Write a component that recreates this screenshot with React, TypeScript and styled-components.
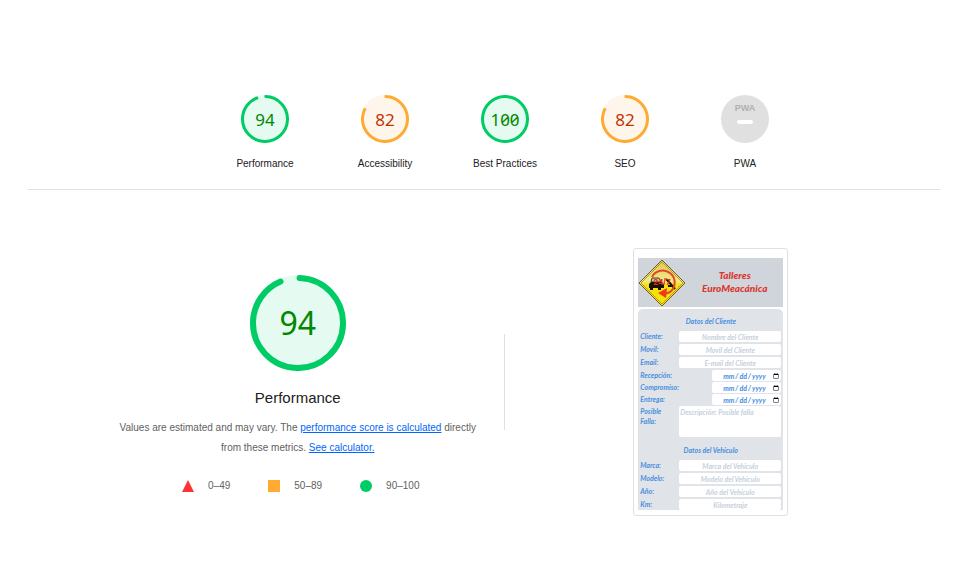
import React from "react";
import styled, { createGlobalStyle, css } from "styled-components";

const GlobalStyle = createGlobalStyle`
  * { box-sizing: border-box; }
  body {
    margin: 0;
    background: #fff;
    color: #212121;
    font-family: "Liberation Sans", Arial, sans-serif;
    font-size: 10px;
    line-height: 20px;
  }
`;

const palette = {
  pass: { ring: "#00cc66", fill: "#e5faf0", text: "#008800" },
  average: { ring: "#ffaa33", fill: "#fff6eb", text: "#c33300" },
};
type Rating = keyof typeof palette;

const Page = styled.main`
  padding: 95px 27px 0 28px;
`;

const ScoresHeader = styled.header`
  display: flex;
  justify-content: center;
  padding: 0 0 15px 42px;
  border-bottom: 1px solid #e0e0e0;
`;

const GaugeLink = styled.a`
  width: 120px;
  display: flex;
  flex-direction: column;
  align-items: center;
  gap: 11px;
  color: inherit;
  text-decoration: none;
`;

const Dial = styled.div<{ $size: number }>`
  display: grid;
  place-items: center;
  width: ${(p) => p.$size}px;
  height: ${(p) => p.$size}px;
  > * { grid-area: 1 / 1; }
  svg { display: block; }
`;

const Score = styled.span<{ $rating: Rating; $large?: boolean }>`
  font-family: "Noto Sans", sans-serif;
  font-variant-numeric: slashed-zero;
  font-size: ${(p) => (p.$large ? 32 : 17)}px;
  line-height: 1;
  color: ${(p) => palette[p.$rating].text};
`;

const Summary = styled.section`
  display: grid;
  grid-template-columns: 1fr 1fr;
  padding: 58px 23px 0 64px;
`;

const Overview = styled.div`
  display: flex;
  align-items: center;
`;

const Column = styled.div`
  display: flex;
  flex: 1;
  flex-direction: column;
  align-items: center;
  align-self: flex-start;
  padding-top: 27px;
`;

const Rule = styled.div`
  width: 1px;
  height: 96px;
  background: #e0e0e0;
`;

const Title = styled.h2`
  margin: 15px 0 8px;
  font-size: 15px;
  line-height: 24px;
  font-weight: 400;
`;

const Description = styled.p`
  margin: 0;
  max-width: 360px;
  color: #616161;
  text-align: center;
`;

const TextLink = styled.a`
  color: #0066ff;
`;

const Legend = styled.ul`
  display: flex;
  gap: 38px;
  margin: 18px 0 0 6px;
  padding: 0;
  list-style: none;
  color: #616161;
`;

const LegendItem = styled.li`
  display: flex;
  align-items: center;
  gap: 14px;
`;

const Phone = styled.div`
  justify-self: center;
  width: 155px;
  padding: 9px 4px 4px;
  border: 1px solid #e0e0e0;
  border-radius: 3px;
  font-family: Lato, sans-serif;
  font-style: italic;
  font-weight: 700;
  font-size: 7px;
  line-height: 10px;
  color: #4a8fe0;
`;

const Banner = styled.div`
  display: flex;
  align-items: center;
  height: 49px;
  background: #d0d5db;
`;

const BannerTitle = styled.h3`
  flex: 1;
  margin: 0 0 2px;
  color: #dc352f;
  font-size: 10px;
  line-height: 13px;
  font-weight: 900;
  text-align: center;
`;

const Form = styled.form`
  margin-top: 2px;
  padding: 1px 2px 0;
  border-radius: 5px 5px 0 0;
  background: #e0e4e8;
`;

const FormTitle = styled.h4`
  margin: 0;
  padding: 7px 0 6px;
  font-size: 7px;
  line-height: 8px;
  text-align: center;
`;

const Field = styled.label<{ $date?: boolean }>`
  display: grid;
  grid-template-columns: ${(p) => (p.$date ? "72px" : "39px")} 1fr;
  margin-bottom: ${(p) => (p.$date ? 1 : 2)}px;
  &:last-child { margin-bottom: 1px; }
`;

const inputBase = css`
  display: block;
  width: 100%;
  min-width: 0;
  margin: 0;
  border: 0;
  border-radius: 2px;
  background: #fff;
  color: inherit;
  font: inherit;
  &::placeholder { color: #c6d0dc; opacity: 1; }
`;

const TextInput = styled.input`
  ${inputBase}
  height: 11px;
  padding: 0;
  text-align: center;
`;

const DateInput = styled.input`
  ${inputBase}
  height: 11px;
  padding: 0 2px 0 10px;
  &::-webkit-datetime-edit-fields-wrapper { padding: 0; }
  &::-webkit-datetime-edit { padding: 0; }
  &::-webkit-calendar-picker-indicator {
    width: 6px;
    height: 6px;
    padding: 0;
    margin: 0;
  }
`;

const TextArea = styled.textarea`
  ${inputBase}
  height: 31px;
  padding: 1px;
  resize: none;
`;

const FieldName = styled.span`
  max-width: 42px;
`;

function Ring({ size, score, rating }: { size: number; score: number; rating: Rating }) {
  const stroke = size / 16;
  const radius = size / 2 - stroke / 2;
  const length = 2 * Math.PI * radius;
  const arc = score === 100 ? length : (length * score) / 100 - stroke / 2;
  const { ring, fill } = palette[rating];
  return (
    <svg width={size} height={size} viewBox={`0 0 ${size} ${size}`} aria-hidden="true">
      <circle cx={size / 2} cy={size / 2} r={size / 2} fill={fill} />
      <circle
        cx={size / 2}
        cy={size / 2}
        r={radius}
        fill="none"
        stroke={ring}
        strokeWidth={stroke}
        strokeLinecap="round"
        strokeDasharray={`${arc} ${length}`}
        transform={`rotate(-88 ${size / 2} ${size / 2})`}
      />
    </svg>
  );
}

function Gauge({ label, score, rating }: { label: string; score: number; rating: Rating }) {
  return (
    <GaugeLink href={`#${label}`}>
      <Dial $size={48}>
        <Ring size={48} score={score} rating={rating} />
        <Score $rating={rating}>{score}</Score>
      </Dial>
      <span>{label}</span>
    </GaugeLink>
  );
}

function PwaBadge() {
  return (
    <svg width="48" height="48" viewBox="0 0 48 48" aria-hidden="true">
      <circle cx="24" cy="24" r="24" fill="#e0e0e0" />
      <text x="24" y="16" textAnchor="middle" fontFamily="Liberation Sans" fontWeight="700" fontSize="9" fill="#b0b0b0">PWA</text>
      <rect x="16" y="25" width="16" height="4" rx="2" fill="#fff" />
    </svg>
  );
}

function TowLogo() {
  return (
    <svg width="48" height="48" viewBox="0 0 48 48" aria-hidden="true">
      <defs>
        <linearGradient id="sign" x1="0" y1="0" x2="0" y2="1">
          <stop offset="0" stopColor="#dcc84e" />
          <stop offset="0.45" stopColor="#f4e98a" />
          <stop offset="0.55" stopColor="#f5df12" />
          <stop offset="1" stopColor="#f7e600" />
        </linearGradient>
      </defs>
      <path d="M24 1 47 24 24 47 1 24Z" fill="url(#sign)" stroke="#6e5d28" strokeWidth="1" strokeLinejoin="round" />
      <path d="M24 3 45 24 24 45 3 24Z" fill="none" stroke="#b39c30" strokeWidth="1" strokeLinejoin="round" />
      <path d="M14 19H21L23 23H13Z" fill="#d8c490" stroke="#4a3e1a" strokeWidth="1" />
      <path d="M11 25 13 23H24L26 26V29H23V31H20V29H15V31H12V29H11Z" fill="#171407" />
      <path d="M28 20 31 23 37 30M30 27 34 27" fill="none" stroke="#171407" strokeWidth="2" />
      <path d="M14 18A12 12 0 1 1 32 33L27 35" fill="none" stroke="#e5452c" strokeWidth="2" />
      <path d="M20 34 29 29 28 39Z" fill="#ee3923" />
      <text x="24" y="26" textAnchor="middle" fontFamily="Liberation Sans" fontWeight="700" fontStyle="normal" fontSize="9" fill="#e8281f">24/7</text>
    </svg>
  );
}

function TextField({ name, placeholder }: { name: string; placeholder: string }) {
  return (
    <Field>
      <FieldName>{name}</FieldName>
      <TextInput type="text" placeholder={placeholder} />
    </Field>
  );
}

function DateField({ name }: { name: string }) {
  return (
    <Field $date>
      <FieldName>{name}</FieldName>
      <DateInput type="date" />
    </Field>
  );
}

function PhonePreview() {
  return (
    <Phone>
      <Banner>
        <TowLogo />
        <BannerTitle>Talleres<br />EuroMeacánica</BannerTitle>
      </Banner>
      <Form>
        <FormTitle>Datos del Cliente</FormTitle>
        <TextField name="Cliente:" placeholder="Nombre del Cliente" />
        <TextField name="Movil:" placeholder="Movil del Cliente" />
        <TextField name="Email:" placeholder="E-mail del Cliente" />
        <DateField name="Recepción:" />
        <DateField name="Compromiso:" />
        <DateField name="Entrega:" />
        <Field>
          <FieldName>Posible<br />Falla:</FieldName>
          <TextArea placeholder="Descripción: Posible falla" />
        </Field>
        <FormTitle>Datos del Vehículo</FormTitle>
        <TextField name="Marca:" placeholder="Marca del Vehículo" />
        <TextField name="Modelo:" placeholder="Modelo del Vehículo" />
        <TextField name="Año:" placeholder="Año del Vehículo" />
        <TextField name="Km:" placeholder="Kilometraje" />
      </Form>
    </Phone>
  );
}

export default function App() {
  return (
    <Page>
      <GlobalStyle />
      <ScoresHeader>
        <Gauge label="Performance" score={94} rating="pass" />
        <Gauge label="Accessibility" score={82} rating="average" />
        <Gauge label="Best Practices" score={100} rating="pass" />
        <Gauge label="SEO" score={82} rating="average" />
        <GaugeLink href="#PWA">
          <Dial $size={48}><PwaBadge /></Dial>
          <span>PWA</span>
        </GaugeLink>
      </ScoresHeader>
      <Summary>
        <Overview>
          <Column>
            <Dial $size={96}>
              <Ring size={96} score={94} rating="pass" />
              <Score $rating="pass" $large>94</Score>
            </Dial>
            <Title>Performance</Title>
            <Description>
              Values are estimated and may vary. The{" "}
              <TextLink href="#scoring">performance score is calculated</TextLink> directly from these metrics.{" "}
              <TextLink href="#calculator">See calculator.</TextLink>
            </Description>
            <Legend>
              <LegendItem>
                <svg width="12" height="12" aria-hidden="true"><path d="M6 0 12 12H0Z" fill="#ff3333" /></svg>
                0–49
              </LegendItem>
              <LegendItem>
                <svg width="12" height="12" aria-hidden="true"><rect width="12" height="12" fill="#ffaa33" /></svg>
                50–89
              </LegendItem>
              <LegendItem>
                <svg width="12" height="12" aria-hidden="true"><circle cx="6" cy="6" r="6" fill="#00cc66" /></svg>
                90–100
              </LegendItem>
            </Legend>
          </Column>
          <Rule />
        </Overview>
        <PhonePreview />
      </Summary>
    </Page>
  );
}
